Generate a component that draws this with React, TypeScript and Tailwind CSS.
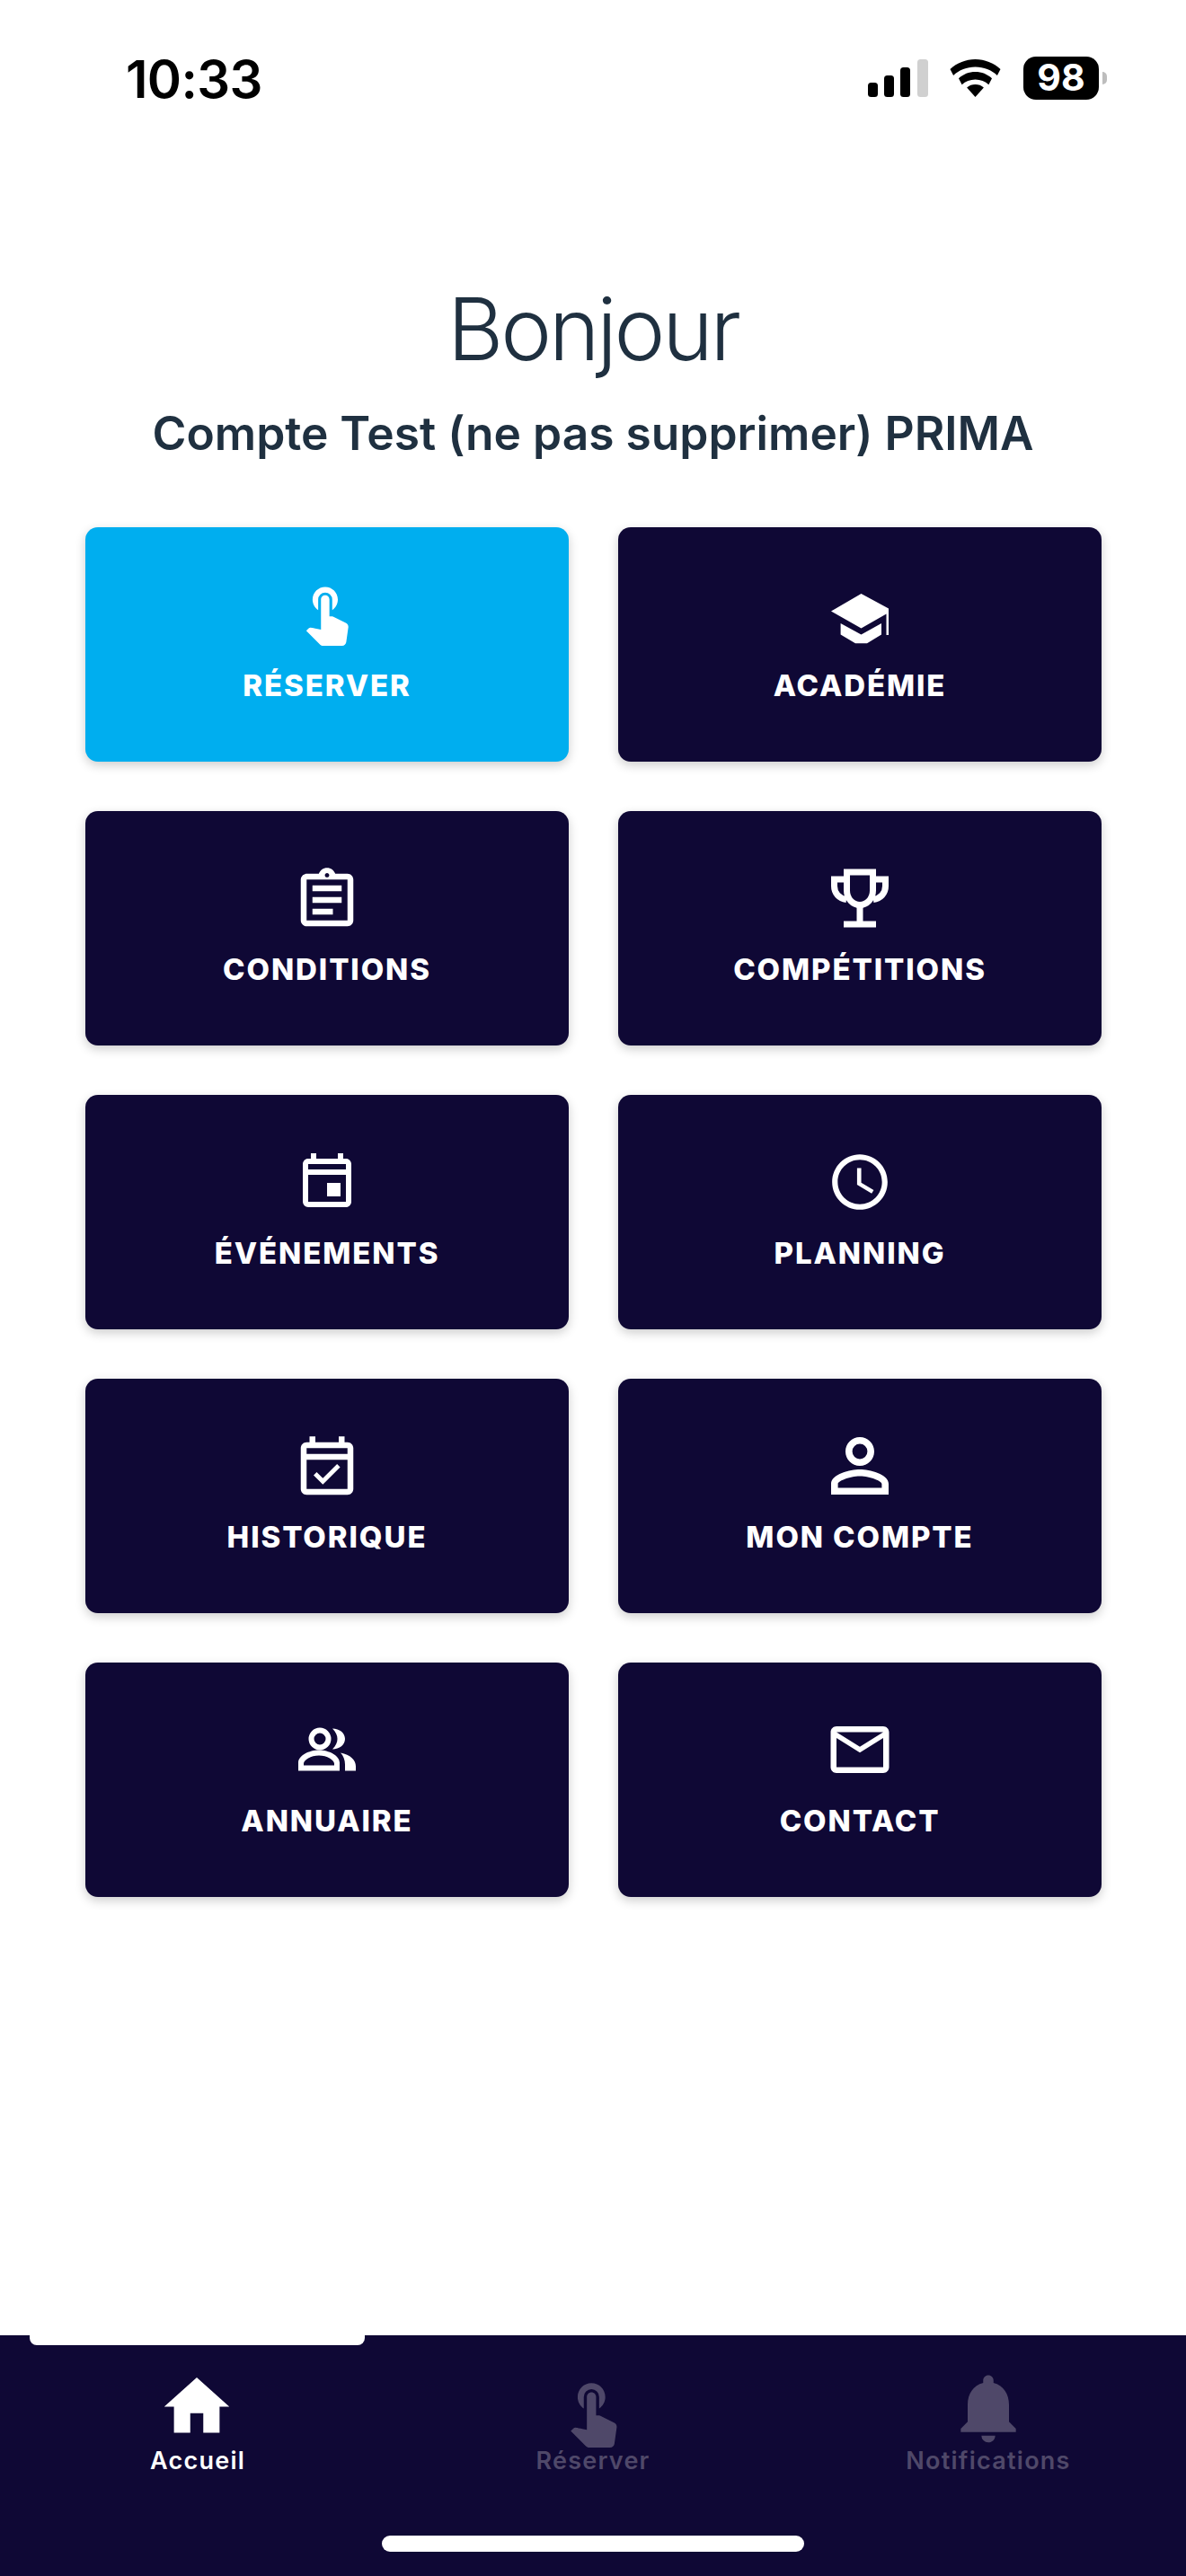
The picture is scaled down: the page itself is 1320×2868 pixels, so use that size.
import type { ReactNode } from "react";
import {
  MdAccessTime,
  MdHome,
  MdMailOutline,
  MdNotifications,
  MdOutlineAssignment,
  MdOutlineEvent,
  MdOutlineEventAvailable,
  MdPersonOutline,
  MdTouchApp,
} from "react-icons/md";

function SchoolIcon() {
  return (
    <svg width="78" height="78" viewBox="-7 -16 78 78" fill="#fff">
      <path d="M33.5 0L64 16.5V46H61.5V22.5L33.5 38.5L0 19.5Z" />
      <path d="M10.6 33L33.5 45.5L56 33V45.5L40 55.3H27L10.6 45.5Z" />
    </svg>
  );
}

function TrophyIcon() {
  return (
    <svg width="78" height="78" viewBox="-7 -6.5 78 78" fill="none" stroke="#fff" strokeWidth="7">
      <path d="M17.5 3.5H46.5V24C46.5 33 40 40 32 40C24 40 17.5 33 17.5 24Z" />
      <path d="M15 11.5H3.5V19C3.5 27 9 33 17 34" />
      <path d="M49 11.5H60.5V19C60.5 27 55 33 47 34" />
      <path d="M32 40V60" />
      <path d="M14 61.5H50" />
    </svg>
  );
}

function PeopleIcon() {
  return (
    <svg width="78" height="78" viewBox="45 28.5 78 78" fill="#fff">
      <circle cx="76" cy="55.5" r="9.5" fill="none" stroke="#fff" strokeWidth="6" />
      <path
        fillRule="evenodd"
        d="M52 91V82C52 74 64 68 75 68C86 68 98 74 98 82V91ZM58 85H92V83C92 79 84 74 75 74C66 74 58 79 58 83Z"
      />
      <path d="M90 44C98 44 104 49 104 55.5C104 62 98 67 90 67C94 63 95.5 59 95.5 55.5C95.5 52 94 48 90 44Z" />
      <path d="M99 71C110 73 116 79 116 86V91H104V84C104 79 102 74 99 71Z" />
    </svg>
  );
}

const tiles: { label: string; icon: ReactNode; active?: boolean }[] = [
  {
    label: "RÉSERVER",
    icon: <MdTouchApp className="h-[75px] w-[75px] shrink-0 -translate-x-px -translate-y-[3px]" />,
    active: true,
  },
  { label: "ACADÉMIE", icon: <SchoolIcon /> },
  { label: "CONDITIONS", icon: <MdOutlineAssignment className="h-[78px] w-[78px] shrink-0 translate-y-[2px]" /> },
  { label: "COMPÉTITIONS", icon: <TrophyIcon /> },
  { label: "ÉVÉNEMENTS", icon: <MdOutlineEvent className="h-[72px] w-[72px] shrink-0 -translate-y-[2px]" /> },
  { label: "PLANNING", icon: <MdAccessTime className="h-[74px] w-[74px] shrink-0" /> },
  { label: "HISTORIQUE", icon: <MdOutlineEventAvailable className="h-[78px] w-[78px] shrink-0 translate-y-[3px]" /> },
  { label: "MON COMPTE", icon: <MdPersonOutline className="h-[96px] w-[96px] shrink-0" /> },
  { label: "ANNUAIRE", icon: <PeopleIcon /> },
  { label: "CONTACT", icon: <MdMailOutline className="h-[78px] w-[78px] shrink-0" /> },
];

function StatusBar() {
  return (
    <div className="flex h-[170px] items-start justify-between pt-[58px] pl-[140px] pr-[88px] text-black">
      <span className="font-['Inter',sans-serif] text-[58px] leading-[60px] font-semibold tracking-[-0.7px]">
        10:33
      </span>
      <div className="flex items-center pt-[5px]">
        <svg width="67" height="42" viewBox="0 0 67 42" className="mr-[24px]">
          <rect x="0" y="26" width="11" height="16" rx="3.5" fill="#000" />
          <rect x="18" y="18" width="11" height="24" rx="3.5" fill="#000" />
          <rect x="36" y="9" width="11" height="33" rx="3.5" fill="#000" />
          <rect x="55" y="0" width="12" height="42" rx="3.5" fill="#d0d0d0" />
        </svg>
        <svg width="57" height="42" viewBox="0 0 57 42" className="mr-[25px]">
          <path d="M28.5 0C18 0 8 4 0.5 11l3.6 7C10.5 12 19 8.5 28.5 8.5S46.5 12 52.9 18l3.6-7C49 4 39 0 28.5 0z" fill="#000" />
          <path d="M28.5 14c-7 0-13.5 2.6-18.5 7.2l3.6 7c3.9-3.6 9.2-5.7 14.9-5.7s11 2.1 14.9 5.7l3.6-7C42 16.6 35.5 14 28.5 14z" fill="#000" />
          <path d="M28.5 28c-3.5 0-6.8 1.2-9.4 3.4L28.5 42l9.4-10.6C35.3 29.2 32 28 28.5 28z" fill="#000" />
        </svg>
        <div className="flex h-[48px] w-[84px] items-center justify-center rounded-[14px] bg-black font-['Inter',sans-serif] text-[41px] font-bold text-white">
          98
        </div>
        <div className="ml-[4px] h-[14px] w-[5px] rounded-r-full bg-[#bdbdbd]" />
      </div>
    </div>
  );
}

function Tile({ label, icon, active }: { label: string; icon: ReactNode; active?: boolean }) {
  return (
    <div
      className={`flex h-[261px] flex-col items-center rounded-[14px] pt-[58px] text-white shadow-[0_4px_12px_rgba(0,0,0,0.2)] ${
        active ? "bg-[#00aeef]" : "bg-[#0f0835]"
      }`}
    >
      <div className="flex h-[78px] w-[78px] items-center justify-center">{icon}</div>
      <span className="mt-[20px] font-['Inter',sans-serif] text-[33px] leading-[40px] font-extrabold tracking-[1.9px]">
        {label}
      </span>
    </div>
  );
}

function TabItem({ label, icon, active }: { label: string; icon: ReactNode; active?: boolean }) {
  return (
    <div className={`flex w-[440px] flex-col items-center ${active ? "text-white" : "text-[#4f4869]"}`}>
      <div className="flex h-[90px] w-[90px] items-center justify-center">{icon}</div>
      <span className="font-['Inter',sans-serif] text-[27px] leading-[32px] font-semibold tracking-[1.25px]">
        {label}
      </span>
    </div>
  );
}

export default function App() {
  return (
    <div className="flex h-[2868px] w-[1320px] flex-col overflow-hidden bg-white">
      <StatusBar />
      <main className="flex flex-1 flex-col items-center">
        <h1 className="mt-[138px] font-['Inter',sans-serif] text-[96px] leading-[116px] font-light tracking-[-3.2px] text-[#1f3040]">
          Bonjour
        </h1>
        <p className="mt-[27px] font-['Inter',sans-serif] text-[51.5px] leading-[62px] font-semibold text-[#1f3040]">
          Compte Test (ne pas supprimer) PRIMA
        </p>
        <div className="mt-[74px] grid w-full grid-cols-[538px_538px] gap-x-[55px] gap-y-[55px] px-[95px]">
          {tiles.map((tile) => (
            <Tile key={tile.label} {...tile} />
          ))}
        </div>
      </main>
      <nav className="relative flex h-[268px] bg-[#0f0835] pt-[34px]">
        <div className="absolute top-0 left-[33px] h-[11px] w-[373px] rounded-b-[8px] bg-white" />
        <TabItem label="Accueil" active icon={<MdHome className="h-[87px] w-[87px] shrink-0 -translate-x-[1.5px]" />} />
        <TabItem label="Réserver" icon={<MdTouchApp className="h-[82px] w-[82px] shrink-0 translate-y-[5px]" />} />
        <TabItem label="Notifications" icon={<MdNotifications className="h-[92px] w-[92px] shrink-0 translate-y-[2px]" />} />
        <div className="absolute top-[223px] left-[425px] h-[18px] w-[470px] rounded-full bg-white" />
      </nav>
    </div>
  );
}
